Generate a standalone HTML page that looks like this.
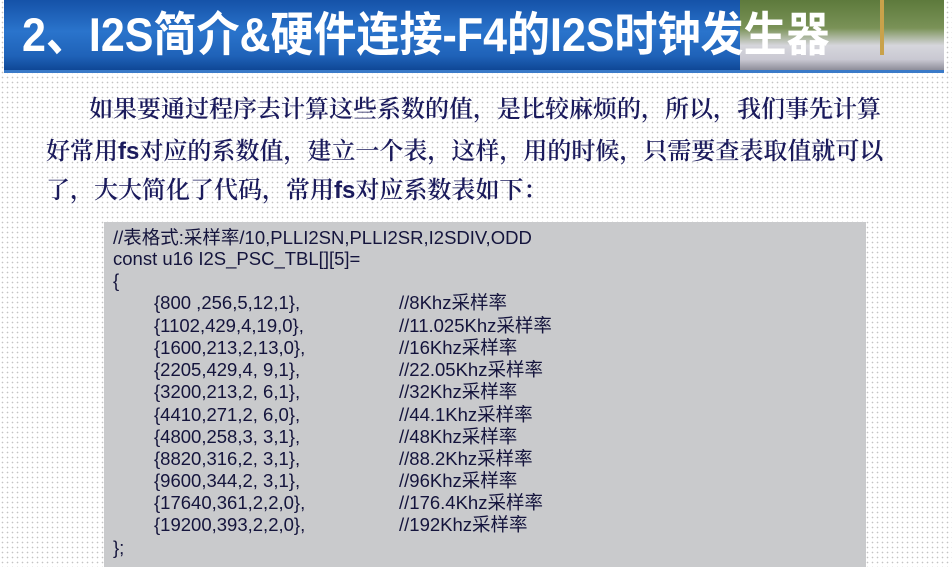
<!DOCTYPE html>
<html><head><meta charset="utf-8"><style>
body{margin:0;width:952px;height:567px;overflow:hidden;position:relative;background-color:#fff;
background-image:radial-gradient(circle,#c4c4c4 0.7px,transparent 0.9px);background-size:5px 5px;font-family:"Liberation Sans","Noto Sans CJK SC",sans-serif}
.hdr{position:absolute;left:4px;top:0;width:940px;height:70px;background:linear-gradient(180deg,#1552a8 0%,#2a74cc 45%,#1f62b8 80%,#0f4796 100%);border-bottom:3px solid #3a7ac8}
.img{position:absolute;left:740px;top:0;width:204px;height:70px;background:linear-gradient(180deg,#5d7a3c 0%,#7a9257 40%,#d6d6dc 65%,#c9c8d2 85%,#8e8e9a 100%)}
.stem{position:absolute;left:880px;top:0;width:4px;height:55px;background:#c9a24a}
.title{position:absolute;left:22px;top:8px;font-size:43px;line-height:50px;font-weight:bold;color:#fff;white-space:nowrap;font-family:"Liberation Sans","Noto Sans CJK SC",sans-serif;transform:scaleY(1.1);transform-origin:left top}
.p{position:absolute;left:46px;font-family:"Liberation Serif","Noto Serif CJK SC",serif;font-size:24px;line-height:30px;color:#1b1b5c;white-space:nowrap;font-weight:600}
.p b{font-family:"Liberation Sans",sans-serif;font-weight:bold}
.code{position:absolute;left:104px;top:222px;width:762px;height:345px;background:#c9cacc}
.l{position:absolute;font-size:18.5px;line-height:20px;color:#14143c;white-space:nowrap;font-family:"Liberation Sans","Noto Sans CJK SC",sans-serif}
</style></head><body>
<div class="hdr"></div>
<div class="img"></div><div class="stem"></div>
<div class="title">2、I2S简介&amp;硬件连接-F4的I2S时钟发生器</div>
<div class="p" style="left:89px;top:95px">如果要通过程序去计算这些系数的值，是比较麻烦的，所以，我们事先计算</div>
<div class="p" style="top:137px">好常用<b>fs</b>对应的系数值，建立一个表，这样，用的时候，只需要查表取值就可以</div>
<div class="p" style="top:176px">了，大大简化了代码，常用<b>fs</b>对应系数表如下：</div>
<div class="code"></div>
<div class="l" style="left:113px;top:228px">//表格式:采样率/10,PLLI2SN,PLLI2SR,I2SDIV,ODD</div>
<div class="l" style="left:113px;top:249px">const u16 I2S_PSC_TBL[][5]=</div>
<div class="l" style="left:113px;top:271px">{</div>
<div class="l" style="left:154px;top:293px">{800 ,256,5,12,1},</div><div class="l" style="left:399px;top:293px">//8Khz采样率</div>
<div class="l" style="left:154px;top:316px">{1102,429,4,19,0},</div><div class="l" style="left:399px;top:316px">//11.025Khz采样率</div>
<div class="l" style="left:154px;top:338px">{1600,213,2,13,0},</div><div class="l" style="left:399px;top:338px">//16Khz采样率</div>
<div class="l" style="left:154px;top:360px">{2205,429,4, 9,1},</div><div class="l" style="left:399px;top:360px">//22.05Khz采样率</div>
<div class="l" style="left:154px;top:382px">{3200,213,2, 6,1},</div><div class="l" style="left:399px;top:382px">//32Khz采样率</div>
<div class="l" style="left:154px;top:405px">{4410,271,2, 6,0},</div><div class="l" style="left:399px;top:405px">//44.1Khz采样率</div>
<div class="l" style="left:154px;top:427px">{4800,258,3, 3,1},</div><div class="l" style="left:399px;top:427px">//48Khz采样率</div>
<div class="l" style="left:154px;top:449px">{8820,316,2, 3,1},</div><div class="l" style="left:399px;top:449px">//88.2Khz采样率</div>
<div class="l" style="left:154px;top:471px">{9600,344,2, 3,1},</div><div class="l" style="left:399px;top:471px">//96Khz采样率</div>
<div class="l" style="left:154px;top:493px">{17640,361,2,2,0},</div><div class="l" style="left:399px;top:493px">//176.4Khz采样率</div>
<div class="l" style="left:154px;top:515px">{19200,393,2,2,0},</div><div class="l" style="left:399px;top:515px">//192Khz采样率</div>
<div class="l" style="left:113px;top:538px">};</div>
</body></html>
